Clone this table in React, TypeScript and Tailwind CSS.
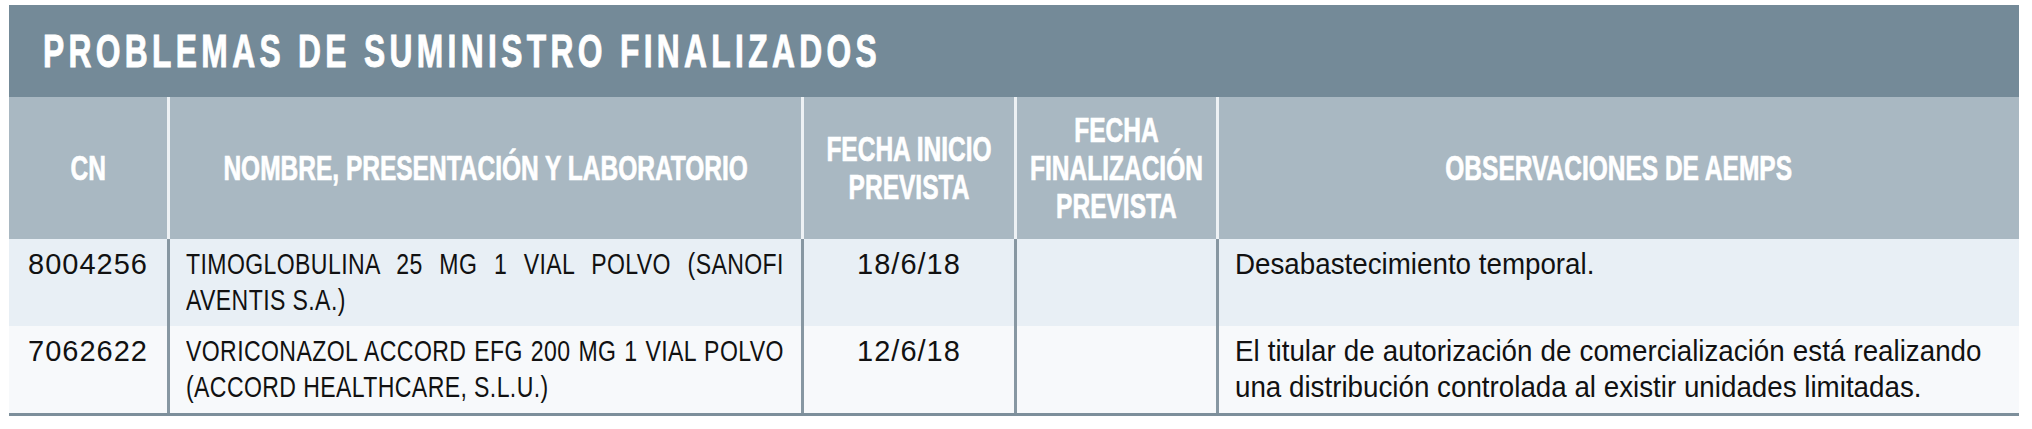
const sans = "font-['Liberation_Sans','Arial',sans-serif]";

type Row = {
  cn: string;
  nombre: string;
  inicio: string;
  fin: string;
  obs: string;
  bg: string;
};

const rows: Row[] = [
  {
    cn: "8004256",
    nombre: "TIMOGLOBULINA 25 MG 1 VIAL POLVO (SANOFI AVENTIS S.A.)",
    inicio: "18/6/18",
    fin: "",
    obs: "Desabastecimiento temporal.",
    bg: "bg-[#e8eff5]",
  },
  {
    cn: "7062622",
    nombre: "VORICONAZOL ACCORD EFG 200 MG 1 VIAL POLVO (ACCORD HEALTHCARE, S.L.U.)",
    inicio: "12/6/18",
    fin: "",
    obs: "El titular de autorización de comercialización está realizando una distribución controlada al existir unidades limitadas.",
    bg: "bg-[#f7f9fb]",
  },
];

// condensed look: no narrow family installed, so squeeze Liberation Sans
function HeadCell({ lines, first }: { lines: string[]; first?: boolean }) {
  return (
    <div
      className={`flex items-center justify-center text-center ${
        first ? "" : "border-l-[3px] border-[#edf1f4]"
      }`}
    >
      <span
        className={`inline-block whitespace-nowrap scale-x-[0.7] text-[35px] leading-[38px] font-bold text-white [-webkit-text-stroke:0.7px_white] ${sans}`}
      >
        {lines.map((l, i) => (
          <span key={i} className="block">
            {l}
          </span>
        ))}
      </span>
    </div>
  );
}

export default function App() {
  return (
    <div className="bg-white min-h-screen pt-[5px] pl-[9px]">
      <div className="w-[2010px]">
        <div className="h-[92px] bg-[#748a98] flex items-center pl-[34px]">
          <h1
            className={`origin-left scale-x-[0.69] whitespace-nowrap text-[46px] font-bold text-white tracking-[6.3px] [-webkit-text-stroke:0.9px_white] ${sans}`}
          >
            PROBLEMAS DE SUMINISTRO FINALIZADOS
          </h1>
        </div>

        <div className="grid grid-cols-[158px_634px_213px_202px_1fr] h-[142px] bg-[#a9b8c2]">
          <HeadCell lines={["CN"]} first />
          <HeadCell lines={["NOMBRE, PRESENTACIÓN Y LABORATORIO"]} />
          <HeadCell lines={["FECHA INICIO", "PREVISTA"]} />
          <HeadCell lines={["FECHA", "FINALIZACIÓN", "PREVISTA"]} />
          <HeadCell lines={["OBSERVACIONES DE AEMPS"]} />
        </div>

        <div
          className={`border-b-[3px] border-[#7d8f9b] text-[29px] leading-[36px] text-[#111] ${sans}`}
        >
          {rows.map((r) => (
            <div
              key={r.cn}
              className={`grid grid-cols-[158px_634px_213px_202px_1fr] ${r.bg}`}
            >
              <div className="pt-[7px] pb-[8px] text-center tracking-[1px]">{r.cn}</div>
              <div className="pt-[7px] pb-[8px] pl-4 border-l-[3px] border-[#8797a2]">
                <div className="w-[752px] origin-left scale-x-[0.795] text-justify tracking-[0.5px]">
                  {r.nombre}
                </div>
              </div>
              <div className="pt-[7px] pb-[8px] text-center tracking-[1px] border-l-[3px] border-[#8797a2]">
                {r.inicio}
              </div>
              <div className="pt-[7px] pb-[8px] text-center border-l-[3px] border-[#8797a2]">
                {r.fin}
              </div>
              <div className="pt-[7px] pb-[8px] pl-4 border-l-[3px] border-[#8797a2] min-w-0">
                <div className="w-[780px] origin-left scale-x-[0.957] text-justify">
                  {r.obs}
                </div>
              </div>
            </div>
          ))}
        </div>
      </div>
    </div>
  );
}
